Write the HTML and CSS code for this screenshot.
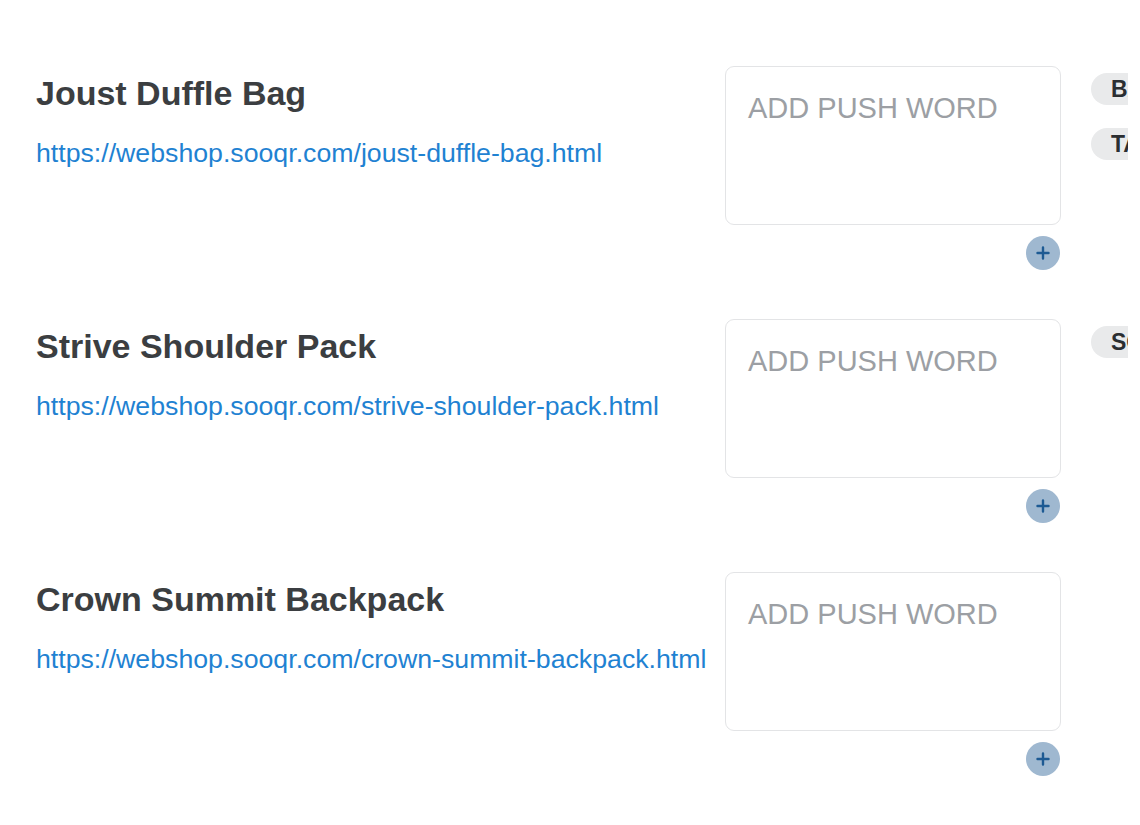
FILE: index.html
```html
<!DOCTYPE html>
<html>
<head>
    <title>Push words</title>
    <link rel="stylesheet" href="styles.css">
</head>
<body>
    <div class="page">
        <div class="product">
            <div class="info">
                <h2 class="name">Joust Duffle Bag</h2>
                <a class="url" href="#">https://webshop.sooqr.com/joust-duffle-bag.html</a>
            </div>
            <div class="words">
                <textarea class="word-input" placeholder="ADD PUSH WORD"></textarea>
                <button class="add-btn"><svg width="14" height="14" viewBox="0 0 14 14"><path d="M7 1.5v11M1.5 7h11" stroke="#1d5a93" stroke-width="2.4" stroke-linecap="round"/></svg></button>
            </div>
            <div class="tags">
                <span class="tag">BAG</span>
                <span class="tag">TAS</span>
            </div>
        </div>

        <div class="product">
            <div class="info">
                <h2 class="name">Strive Shoulder Pack</h2>
                <a class="url" href="#">https://webshop.sooqr.com/strive-shoulder-pack.html</a>
            </div>
            <div class="words">
                <textarea class="word-input" placeholder="ADD PUSH WORD"></textarea>
                <button class="add-btn"><svg width="14" height="14" viewBox="0 0 14 14"><path d="M7 1.5v11M1.5 7h11" stroke="#1d5a93" stroke-width="2.4" stroke-linecap="round"/></svg></button>
            </div>
            <div class="tags">
                <span class="tag">SCHOUDER</span>
            </div>
        </div>

        <div class="product">
            <div class="info">
                <h2 class="name">Crown Summit Backpack</h2>
                <a class="url" href="#">https://webshop.sooqr.com/crown-summit-backpack.html</a>
            </div>
            <div class="words">
                <textarea class="word-input" placeholder="ADD PUSH WORD"></textarea>
                <button class="add-btn"><svg width="14" height="14" viewBox="0 0 14 14"><path d="M7 1.5v11M1.5 7h11" stroke="#1d5a93" stroke-width="2.4" stroke-linecap="round"/></svg></button>
            </div>
            <div class="tags"></div>
        </div>
    </div>
</body>
</html>
```

FILE: styles.css
```css
body {
    margin: 0;
    background-color: #ffffff;
    font-family: "Liberation Sans", Arial, sans-serif;
}

.page {
    width: 1128px;
    overflow: hidden;
    padding-top: 66px;
}

.product {
    display: grid;
    grid-template-columns: 725px 336px 200px;
    height: 253px;
}

.info {
    padding-left: 36px;
    padding-top: 7px;
}

.name {
    margin: 0;
    font-size: 34px;
    font-weight: bold;
    color: #3b3e41;
    line-height: 40px;
}

.url {
    display: block;
    margin-top: 25px;
    font-size: 26.7px;
    color: #1f82d2;
    text-decoration: none;
    white-space: nowrap;
}

.words {
    display: flex;
    flex-direction: column;
    align-items: flex-end;
}

.word-input {
    box-sizing: border-box;
    width: 336px;
    height: 159px;
    padding: 25px 22px;
    border: 1.5px solid #e3e4e6;
    border-radius: 9px;
    resize: none;
    font-family: "Liberation Sans", Arial, sans-serif;
    font-size: 29px;
    line-height: 33px;
    outline: none;
}

.word-input::placeholder {
    color: #9c9fa4;
}

.add-btn {
    margin-top: 11px;
    margin-right: 1px;
    width: 34px;
    height: 34px;
    border: none;
    border-radius: 50%;
    background-color: #9fb8d0;
    padding: 0;
    display: flex;
    align-items: center;
    justify-content: center;
}

.tags {
    display: flex;
    flex-direction: column;
    align-items: flex-start;
    gap: 23px;
    padding-top: 7px;
    padding-left: 30px;
}

.tag {
    height: 32px;
    line-height: 32px;
    padding: 0 20px;
    border-radius: 16px;
    background-color: #e9eaeb;
    color: #2b2e31;
    font-size: 23px;
    font-weight: bold;
    white-space: nowrap;
}
```
